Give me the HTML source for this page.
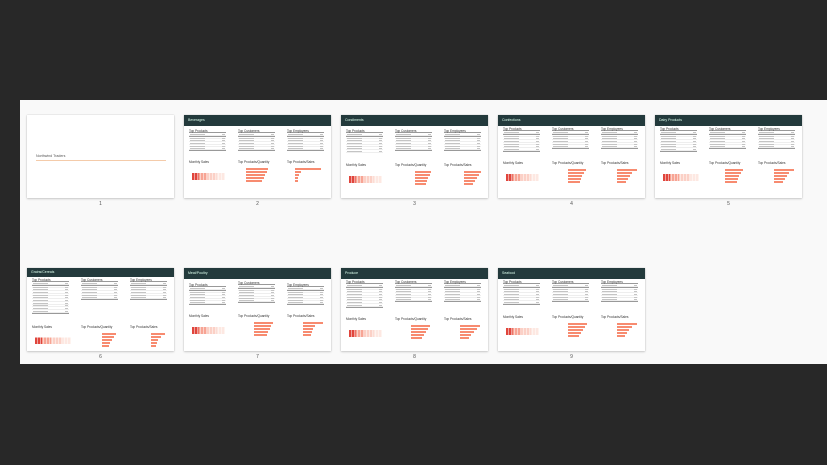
<!DOCTYPE html>
<html><head><meta charset="utf-8"><style>
*{margin:0;padding:0;box-sizing:border-box}
body{width:827px;height:465px;background:#282828;position:relative;overflow:hidden;font-family:"Liberation Sans",sans-serif}
.band{position:absolute;left:20px;top:100px;width:807px;height:264px;background:#f9f9f9}
.s{position:absolute;width:147px;height:83px;background:#fff;box-shadow:0 0 1px #bbb,0 1px 2px #ccc;overflow:hidden}
.n{position:absolute;width:147px;text-align:center;font-size:5px;color:#555}
.h{height:11px;background:#233a3c;color:#dfe;font-size:3.5px;padding:3px 0 0 4px}
.c{position:absolute;width:37px}
.t{font-size:3.2px;color:#333;border-bottom:0.6px solid #999;height:4px}
.r{height:2.3px;border-bottom:0.3px solid #eee;margin-top:0.4px;position:relative}
.r:before{content:"";position:absolute;left:1px;top:0.6px;width:15px;height:0.8px;background:#c4c4c4}
.r:after{content:"";position:absolute;right:1px;top:0.6px;width:3px;height:0.8px;background:#c4c4c4}
.e{border-bottom:0.6px solid #999;height:1px}
.hm{position:absolute;height:10px;width:33px;background:
repeating-linear-gradient(90deg,transparent 0 2.5px,#fff 2.5px 3px),
linear-gradient(180deg,#fff 0 30%,transparent 30%),
linear-gradient(90deg,#e0453c 0 20%,#f7a494 20% 45%,#fbd0c6 45% 75%,#fde8e2 75%)}
.b{position:absolute;height:1.8px;background:#f78b70}
</style></head><body>
<div class="band"></div>

<div class="s" style="left:27px;top:115px"><div style="position:absolute;left:9px;top:39px;font-size:3.6px;color:#555">Northwind Traders</div><div style="position:absolute;left:9px;top:45px;width:130px;height:1px;background:#f4cbaa"></div></div>
<div class="n" style="left:27px;top:201px">1</div>

<div class="s" style="left:184px;top:115px"><div class="h">Beverages</div>
<div class="c" style="left:5px;top:14px"><div class="t">Top Products</div><div class="r"></div><div class="e"></div><div class="r"></div><div class="r"></div><div class="r"></div><div class="r"></div><div class="r"></div><div class="e"></div></div>
<div class="c" style="left:54px;top:14px"><div class="t">Top Customers</div><div class="r"></div><div class="e"></div><div class="r"></div><div class="r"></div><div class="r"></div><div class="r"></div><div class="r"></div><div class="e"></div></div>
<div class="c" style="left:103px;top:14px"><div class="t">Top Employees</div><div class="r"></div><div class="e"></div><div class="r"></div><div class="r"></div><div class="r"></div><div class="r"></div><div class="r"></div><div class="e"></div></div>
<div class="c" style="left:5px;top:45px"><div class="t" style="border:0">Monthly Sales</div></div>
<div class="hm" style="left:8px;top:55px"></div>
<div class="c" style="left:54px;top:45px"><div class="t" style="border:0">Top Products/Quantity</div></div>
<div class="b" style="left:62px;top:53px;width:22px"></div><div class="b" style="left:62px;top:56px;width:21px"></div><div class="b" style="left:62px;top:59px;width:19px"></div><div class="b" style="left:62px;top:62px;width:18px"></div><div class="b" style="left:62px;top:65px;width:16px"></div>
<div class="c" style="left:103px;top:45px"><div class="t" style="border:0">Top Products/Sales</div></div>
<div class="b" style="left:111px;top:53px;width:26px"></div><div class="b" style="left:111px;top:56px;width:6px"></div><div class="b" style="left:111px;top:59px;width:4px"></div><div class="b" style="left:111px;top:62px;width:3px"></div><div class="b" style="left:111px;top:65px;width:3px"></div>
</div>
<div class="n" style="left:184px;top:201px">2</div>

<div class="s" style="left:341px;top:115px"><div class="h">Condiments</div>
<div class="c" style="left:5px;top:14px"><div class="t">Top Products</div><div class="r"></div><div class="e"></div><div class="r"></div><div class="r"></div><div class="r"></div><div class="r"></div><div class="r"></div><div class="r"></div></div>
<div class="c" style="left:54px;top:14px"><div class="t">Top Customers</div><div class="r"></div><div class="e"></div><div class="r"></div><div class="r"></div><div class="r"></div><div class="r"></div><div class="r"></div><div class="e"></div></div>
<div class="c" style="left:103px;top:14px"><div class="t">Top Employees</div><div class="r"></div><div class="e"></div><div class="r"></div><div class="r"></div><div class="r"></div><div class="r"></div><div class="r"></div><div class="e"></div></div>
<div class="c" style="left:5px;top:48px"><div class="t" style="border:0">Monthly Sales</div></div><div class="hm" style="left:8px;top:58px"></div>
<div class="c" style="left:54px;top:48px"><div class="t" style="border:0">Top Products/Quantity</div></div>
<div class="b" style="left:74px;top:56px;width:16px"></div><div class="b" style="left:74px;top:59px;width:15px"></div><div class="b" style="left:74px;top:62px;width:13px"></div><div class="b" style="left:74px;top:65px;width:12px"></div><div class="b" style="left:74px;top:68px;width:11px"></div>
<div class="c" style="left:103px;top:48px"><div class="t" style="border:0">Top Products/Sales</div></div>
<div class="b" style="left:123px;top:56px;width:17px"></div><div class="b" style="left:123px;top:59px;width:15px"></div><div class="b" style="left:123px;top:62px;width:13px"></div><div class="b" style="left:123px;top:65px;width:11px"></div><div class="b" style="left:123px;top:68px;width:9px"></div>
</div>
<div class="n" style="left:341px;top:201px">3</div>

<div class="s" style="left:498px;top:115px"><div class="h">Confections</div>
<div class="c" style="left:5px;top:12px"><div class="t">Top Products</div><div class="r"></div><div class="e"></div><div class="r"></div><div class="r"></div><div class="r"></div><div class="r"></div><div class="r"></div><div class="r"></div><div class="e"></div></div>
<div class="c" style="left:54px;top:12px"><div class="t">Top Customers</div><div class="r"></div><div class="e"></div><div class="r"></div><div class="r"></div><div class="r"></div><div class="r"></div><div class="r"></div><div class="e"></div></div>
<div class="c" style="left:103px;top:12px"><div class="t">Top Employees</div><div class="r"></div><div class="e"></div><div class="r"></div><div class="r"></div><div class="r"></div><div class="r"></div><div class="r"></div><div class="e"></div></div>
<div class="c" style="left:5px;top:46px"><div class="t" style="border:0">Monthly Sales</div></div><div class="hm" style="left:8px;top:56px"></div>
<div class="c" style="left:54px;top:46px"><div class="t" style="border:0">Top Products/Quantity</div></div>
<div class="b" style="left:70px;top:54px;width:18px"></div><div class="b" style="left:70px;top:57px;width:16px"></div><div class="b" style="left:70px;top:60px;width:14px"></div><div class="b" style="left:70px;top:63px;width:13px"></div><div class="b" style="left:70px;top:66px;width:12px"></div>
<div class="c" style="left:103px;top:46px"><div class="t" style="border:0">Top Products/Sales</div></div>
<div class="b" style="left:119px;top:54px;width:20px"></div><div class="b" style="left:119px;top:57px;width:15px"></div><div class="b" style="left:119px;top:60px;width:13px"></div><div class="b" style="left:119px;top:63px;width:11px"></div><div class="b" style="left:119px;top:66px;width:9px"></div>
</div>
<div class="n" style="left:498px;top:201px">4</div>

<div class="s" style="left:655px;top:115px"><div class="h">Dairy Products</div>
<div class="c" style="left:5px;top:12px"><div class="t">Top Products</div><div class="r"></div><div class="e"></div><div class="r"></div><div class="r"></div><div class="r"></div><div class="r"></div><div class="r"></div><div class="r"></div><div class="e"></div></div>
<div class="c" style="left:54px;top:12px"><div class="t">Top Customers</div><div class="r"></div><div class="e"></div><div class="r"></div><div class="r"></div><div class="r"></div><div class="r"></div><div class="r"></div><div class="e"></div></div>
<div class="c" style="left:103px;top:12px"><div class="t">Top Employees</div><div class="r"></div><div class="e"></div><div class="r"></div><div class="r"></div><div class="r"></div><div class="r"></div><div class="r"></div><div class="e"></div></div>
<div class="c" style="left:5px;top:46px"><div class="t" style="border:0">Monthly Sales</div></div><div class="hm" style="left:8px;top:56px;width:36px"></div>
<div class="c" style="left:54px;top:46px"><div class="t" style="border:0">Top Products/Quantity</div></div>
<div class="b" style="left:70px;top:54px;width:18px"></div><div class="b" style="left:70px;top:57px;width:16px"></div><div class="b" style="left:70px;top:60px;width:14px"></div><div class="b" style="left:70px;top:63px;width:13px"></div><div class="b" style="left:70px;top:66px;width:12px"></div>
<div class="c" style="left:103px;top:46px"><div class="t" style="border:0">Top Products/Sales</div></div>
<div class="b" style="left:119px;top:54px;width:20px"></div><div class="b" style="left:119px;top:57px;width:15px"></div><div class="b" style="left:119px;top:60px;width:13px"></div><div class="b" style="left:119px;top:63px;width:11px"></div><div class="b" style="left:119px;top:66px;width:9px"></div>
</div>
<div class="n" style="left:655px;top:201px">5</div>

<div class="s" style="left:27px;top:268px"><div class="h" style="height:9px;padding-top:2px">Grains/Cereals</div>
<div class="c" style="left:5px;top:10px"><div class="t">Top Products</div><div class="r"></div><div class="e"></div><div class="r"></div><div class="r"></div><div class="r"></div><div class="r"></div><div class="r"></div><div class="r"></div><div class="r"></div><div class="r"></div><div class="r"></div><div class="r"></div><div class="e"></div></div>
<div class="c" style="left:54px;top:10px"><div class="t">Top Customers</div><div class="r"></div><div class="e"></div><div class="r"></div><div class="r"></div><div class="r"></div><div class="r"></div><div class="r"></div><div class="e"></div></div>
<div class="c" style="left:103px;top:10px"><div class="t">Top Employees</div><div class="r"></div><div class="e"></div><div class="r"></div><div class="r"></div><div class="r"></div><div class="r"></div><div class="r"></div><div class="e"></div></div>
<div class="c" style="left:5px;top:57px"><div class="t" style="border:0">Monthly Sales</div></div><div class="hm" style="left:8px;top:67px;width:36px;height:9px"></div>
<div class="c" style="left:54px;top:57px"><div class="t" style="border:0">Top Products/Quantity</div></div>
<div class="b" style="left:75px;top:65px;width:14px"></div><div class="b" style="left:75px;top:68px;width:12px"></div><div class="b" style="left:75px;top:71px;width:10px"></div><div class="b" style="left:75px;top:74px;width:8px"></div><div class="b" style="left:75px;top:77px;width:7px"></div>
<div class="c" style="left:103px;top:57px"><div class="t" style="border:0">Top Products/Sales</div></div>
<div class="b" style="left:124px;top:65px;width:14px"></div><div class="b" style="left:124px;top:68px;width:10px"></div><div class="b" style="left:124px;top:71px;width:7px"></div><div class="b" style="left:124px;top:74px;width:6px"></div><div class="b" style="left:124px;top:77px;width:5px"></div>
</div>
<div class="n" style="left:27px;top:354px">6</div>

<div class="s" style="left:184px;top:268px"><div class="h">Meat/Poultry</div>
<div class="c" style="left:5px;top:15px"><div class="t">Top Products</div><div class="r"></div><div class="e"></div><div class="r"></div><div class="r"></div><div class="r"></div><div class="r"></div><div class="r"></div><div class="e"></div></div>
<div class="c" style="left:54px;top:13px"><div class="t">Top Customers</div><div class="r"></div><div class="e"></div><div class="r"></div><div class="r"></div><div class="r"></div><div class="r"></div><div class="r"></div><div class="e"></div></div>
<div class="c" style="left:103px;top:15px"><div class="t">Top Employees</div><div class="r"></div><div class="e"></div><div class="r"></div><div class="r"></div><div class="r"></div><div class="r"></div><div class="r"></div><div class="e"></div></div>
<div class="c" style="left:5px;top:46px"><div class="t" style="border:0">Monthly Sales</div></div><div class="hm" style="left:8px;top:56px"></div>
<div class="c" style="left:54px;top:46px"><div class="t" style="border:0">Top Products/Quantity</div></div>
<div class="b" style="left:70px;top:54px;width:19px"></div><div class="b" style="left:70px;top:57px;width:17px"></div><div class="b" style="left:70px;top:60px;width:16px"></div><div class="b" style="left:70px;top:63px;width:14px"></div><div class="b" style="left:70px;top:66px;width:13px"></div>
<div class="c" style="left:103px;top:46px"><div class="t" style="border:0">Top Products/Sales</div></div>
<div class="b" style="left:119px;top:54px;width:20px"></div><div class="b" style="left:119px;top:57px;width:12px"></div><div class="b" style="left:119px;top:60px;width:10px"></div><div class="b" style="left:119px;top:63px;width:9px"></div><div class="b" style="left:119px;top:66px;width:8px"></div>
</div>
<div class="n" style="left:184px;top:354px">7</div>

<div class="s" style="left:341px;top:268px"><div class="h">Produce</div>
<div class="c" style="left:5px;top:12px"><div class="t">Top Products</div><div class="r"></div><div class="e"></div><div class="r"></div><div class="r"></div><div class="r"></div><div class="r"></div><div class="r"></div><div class="r"></div><div class="r"></div><div class="e"></div></div>
<div class="c" style="left:54px;top:12px"><div class="t">Top Customers</div><div class="r"></div><div class="e"></div><div class="r"></div><div class="r"></div><div class="r"></div><div class="r"></div><div class="r"></div><div class="e"></div></div>
<div class="c" style="left:103px;top:12px"><div class="t">Top Employees</div><div class="r"></div><div class="e"></div><div class="r"></div><div class="r"></div><div class="r"></div><div class="r"></div><div class="r"></div><div class="e"></div></div>
<div class="c" style="left:5px;top:49px"><div class="t" style="border:0">Monthly Sales</div></div><div class="hm" style="left:8px;top:59px"></div>
<div class="c" style="left:54px;top:49px"><div class="t" style="border:0">Top Products/Quantity</div></div>
<div class="b" style="left:70px;top:57px;width:19px"></div><div class="b" style="left:70px;top:60px;width:17px"></div><div class="b" style="left:70px;top:63px;width:15px"></div><div class="b" style="left:70px;top:66px;width:13px"></div><div class="b" style="left:70px;top:69px;width:11px"></div>
<div class="c" style="left:103px;top:49px"><div class="t" style="border:0">Top Products/Sales</div></div>
<div class="b" style="left:119px;top:57px;width:20px"></div><div class="b" style="left:119px;top:60px;width:17px"></div><div class="b" style="left:119px;top:63px;width:14px"></div><div class="b" style="left:119px;top:66px;width:11px"></div><div class="b" style="left:119px;top:69px;width:9px"></div>
</div>
<div class="n" style="left:341px;top:354px">8</div>

<div class="s" style="left:498px;top:268px"><div class="h">Seafood</div>
<div class="c" style="left:5px;top:12px"><div class="t">Top Products</div><div class="r"></div><div class="e"></div><div class="r"></div><div class="r"></div><div class="r"></div><div class="r"></div><div class="r"></div><div class="r"></div><div class="e"></div></div>
<div class="c" style="left:54px;top:12px"><div class="t">Top Customers</div><div class="r"></div><div class="e"></div><div class="r"></div><div class="r"></div><div class="r"></div><div class="r"></div><div class="r"></div><div class="e"></div></div>
<div class="c" style="left:103px;top:12px"><div class="t">Top Employees</div><div class="r"></div><div class="e"></div><div class="r"></div><div class="r"></div><div class="r"></div><div class="r"></div><div class="r"></div><div class="e"></div></div>
<div class="c" style="left:5px;top:47px"><div class="t" style="border:0">Monthly Sales</div></div><div class="hm" style="left:8px;top:57px"></div>
<div class="c" style="left:54px;top:47px"><div class="t" style="border:0">Top Products/Quantity</div></div>
<div class="b" style="left:70px;top:55px;width:19px"></div><div class="b" style="left:70px;top:58px;width:17px"></div><div class="b" style="left:70px;top:61px;width:15px"></div><div class="b" style="left:70px;top:64px;width:13px"></div><div class="b" style="left:70px;top:67px;width:11px"></div>
<div class="c" style="left:103px;top:47px"><div class="t" style="border:0">Top Products/Sales</div></div>
<div class="b" style="left:119px;top:55px;width:20px"></div><div class="b" style="left:119px;top:58px;width:15px"></div><div class="b" style="left:119px;top:61px;width:12px"></div><div class="b" style="left:119px;top:64px;width:10px"></div><div class="b" style="left:119px;top:67px;width:8px"></div>
</div>
<div class="n" style="left:498px;top:354px">9</div>
</body></html>
